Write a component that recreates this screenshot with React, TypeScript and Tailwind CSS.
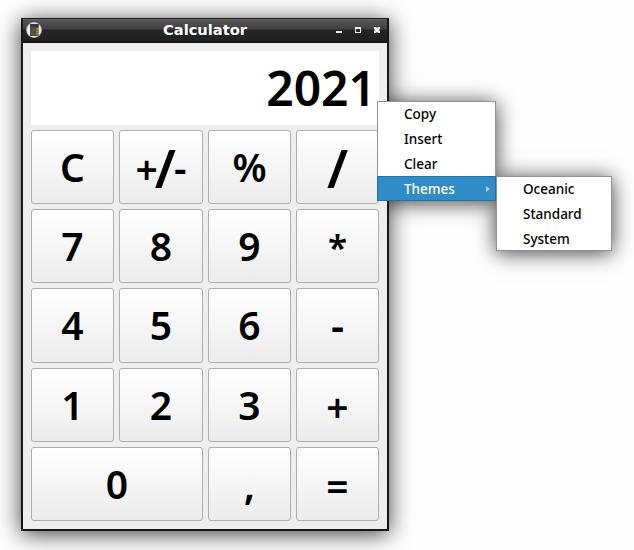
import React from "react";

type Key = { label: string; wide?: boolean; glyph?: string };

const keys: Key[] = [
  { label: "C", glyph: "relative -top-px" },
  { label: "+/-" },
  { label: "%", glyph: "relative -top-px font-[580]" },
  { label: "/", glyph: "relative text-[53px] font-[560] top-0" },
  { label: "7" },
  { label: "8" },
  { label: "9" },
  { label: "*", glyph: "relative top-0 text-[35px]" },
  { label: "4" },
  { label: "5" },
  { label: "6" },
  { label: "-", glyph: "relative top-0 text-[41px]" },
  { label: "1" },
  { label: "2" },
  { label: "3" },
  { label: "+", glyph: "relative top-px" },
  { label: "0", wide: true },
  { label: ",", glyph: "relative top-0 text-[41px]" },
  { label: "=", glyph: "relative top-px" },
];

function AppIcon() {
  return (
    <svg width="16" height="16" viewBox="0 0 16 16">
      <circle cx="8" cy="8" r="7.9" fill="#b9b9b7" />
      <circle cx="8" cy="8" r="7" fill="#ecece9" />
      <rect x="4" y="2" width="8.6" height="12" fill="#4b4b4b" />
      <rect x="4" y="2" width="8.6" height="3" fill="#393939" />
      <path d="M4.5 8.5H10M4.5 11.5H10M6.7 6V14" stroke="#626262" strokeWidth=".5" />
      <path d="M11 6v7.5" stroke="#b98c16" strokeWidth="1.6" strokeDasharray="2 .5" />
    </svg>
  );
}

function TitleBar() {
  return (
    <header className="relative flex h-[25px] items-center justify-between border-t border-b-2 border-t-[#171717] border-b-[#151515] bg-[linear-gradient(#777_0px,#555_1px,#414141_10px,#252525_11px,#202020_22px)] pr-[6px] pl-[3px]">
      <AppIcon />
      <h1 className="absolute top-[2px] left-[140px] font-['DejaVu_Sans',sans-serif] text-[14.67px] leading-[18px] font-bold whitespace-nowrap text-white">
        Calculator
      </h1>
      <svg width="47" height="10" viewBox="0 0 47 10">
        <path d="M2 6h6v2H2z" fill="#eee" />
        <path d="M21 2h6v6h-6zM22 4v3h4V4z" fill="#eee" fillRule="evenodd" />
        <path d="M40 2h2l1 1 1-1h2v2l-1 1 1 1v2h-2l-1-1-1 1h-2V6l1-1-1-1z" fill="#eee" />
      </svg>
    </header>
  );
}

const itemClass = "flex h-[25px] items-center pl-[26px] text-[13.5px] font-[550]";

export default function App() {
  return (
    <main className="relative h-[550px] w-[634px] overflow-hidden bg-[#fefefe] font-['Noto_Sans','Open_Sans',sans-serif] text-black">
      {/* Menu shadows fall behind the calculator window */}
      <div className="absolute top-[101px] left-[377px] h-[100px] w-[119px] shadow-[0_2px_20px_rgba(0,0,0,0.75)]" />
      <div className="absolute top-[176px] left-[496px] h-[75px] w-[116px] shadow-[0_2px_20px_rgba(0,0,0,0.75)]" />
      <section className="absolute top-[18px] left-[21px] flex h-[513px] w-[368px] flex-col border-2 border-t-0 border-[#171717] shadow-[0_3px_22px_rgba(0,0,0,0.75)]">
        <TitleBar />
        <div className="flex flex-1 flex-col gap-[5px] bg-[#eee] p-2">
          <output className="flex h-[74px] items-center justify-end bg-white pr-[3px] text-[48px] leading-none font-[580]">
            <span className="relative top-0">2021</span>
          </output>
          <div className="grid flex-1 grid-cols-[83px_84px_83px_83px] grid-rows-[74px_74px_75px_74px_74px] gap-[5px]">
            {keys.map((key) => (
              <button
                key={key.label}
                className={`flex items-center justify-center rounded-[3px] border border-[#adadad] bg-linear-to-b from-white to-[#ececec] text-[39px] leading-none font-semibold ${key.wide ? "col-span-2" : ""}`}
              >
                {key.label === "+/-" ? (
                  <span className="flex items-center">
                    <span className="relative top-px tracking-[-3px]">+</span>
                    <span className="text-[53px] font-[560] tracking-[-2px]">/</span>
                    <span>-</span>
                  </span>
                ) : (
                  <span className={key.glyph ?? "relative -top-px font-[580]"}>{key.label}</span>
                )}
              </button>
            ))}
          </div>
        </div>
      </section>

      <nav className="absolute top-[101px] left-[377px] h-[100px] w-[119px] border border-[#929292] bg-white">
        <div className={itemClass}>Copy</div>
        <div className={itemClass}>Insert</div>
        <div className={itemClass}>Clear</div>
        <div className="-mx-px -mt-px flex h-[25px] items-center justify-between border border-[#2470a3] bg-[#308cc6] pr-[5px] pl-[26px] text-[13.5px] font-[550] text-white">
          <span className="relative top-px">Themes</span>
          <svg width="4" height="6" viewBox="0 0 4 6"><path d="M0 0l4 3-4 3z" fill="#a7d0e9" /></svg>
        </div>
      </nav>
      <nav className="absolute top-[176px] left-[496px] h-[75px] w-[116px] border border-[#929292] bg-white">
        <div className={itemClass}>Oceanic</div>
        <div className={itemClass}>Standard</div>
        <div className={itemClass}>System</div>
      </nav>
    </main>
  );
}
